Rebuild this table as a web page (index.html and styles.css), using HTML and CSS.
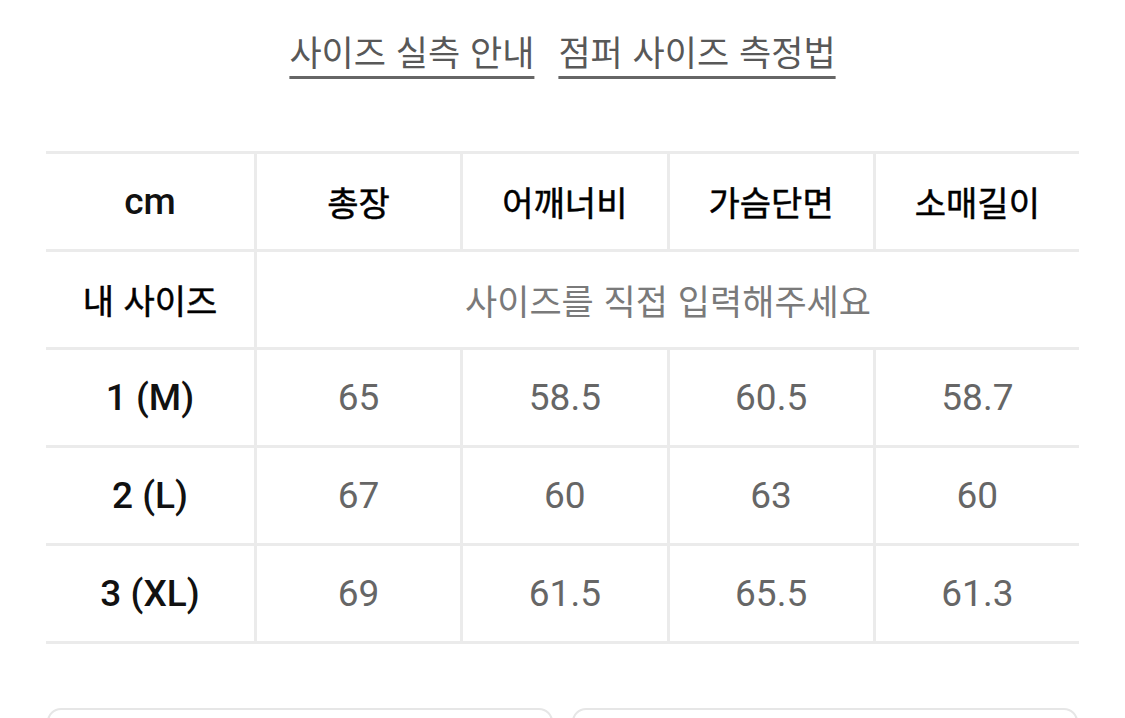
FILE: index.html
```html
<!DOCTYPE html>
<html lang="ko">
<head>
<meta charset="utf-8">
<title>사이즈 실측 안내</title>
<link rel="stylesheet" href="styles.css">
</head>
<body>
<div class="page">
  <nav class="links">
    <a class="link" href="#">사이즈 실측 안내</a>
    <a class="link" href="#">점퍼 사이즈 측정법</a>
  </nav>
  <div class="size-table">
    <div class="cell head">cm</div>
    <div class="cell head ko">총장</div>
    <div class="cell head ko">어깨너비</div>
    <div class="cell head ko">가슴단면</div>
    <div class="cell head ko">소매길이</div>

    <div class="cell head ko">내 사이즈</div>
    <div class="cell placeholder span4">사이즈를 직접 입력해주세요</div>

    <div class="cell head">1 (M)</div>
    <div class="cell val">65</div>
    <div class="cell val">58.5</div>
    <div class="cell val">60.5</div>
    <div class="cell val">58.7</div>

    <div class="cell head">2 (L)</div>
    <div class="cell val">67</div>
    <div class="cell val">60</div>
    <div class="cell val">63</div>
    <div class="cell val">60</div>

    <div class="cell head">3 (XL)</div>
    <div class="cell val">69</div>
    <div class="cell val">61.5</div>
    <div class="cell val">65.5</div>
    <div class="cell val">61.3</div>
  </div>
  <div class="buttons">
    <div class="btn"></div>
    <div class="btn"></div>
  </div>
</div>
</body>
</html>
```

FILE: styles.css
```css
html, body {
  margin: 0;
  padding: 0;
  background: #fff;
}
body {
  font-family: Roboto, "Noto Sans CJK KR", sans-serif;
  color: #111;
  overflow: hidden;
}
.page {
  padding: 0 46px;
}
.links {
  display: flex;
  justify-content: center;
  gap: 24px;
  padding-top: 27px;
  height: 123px;
  box-sizing: border-box;
}
.link {
  font-size: 35px;
  line-height: 48px;
  height: 48px;
  color: #585858;
  text-decoration: underline;
  text-decoration-thickness: 3px;
  text-underline-offset: 10px;
  text-decoration-color: #666;
  font-family: "Noto Sans CJK KR", sans-serif;
}
.size-table {
  display: grid;
  grid-template-columns: 208px repeat(4, 1fr);
  grid-auto-rows: 95px;
  gap: 3px;
  padding: 3px 0;
  background: #ebebeb;
  margin-top: 28px;
}
.cell {
  background: #fff;
  display: flex;
  align-items: center;
  justify-content: center;
  font-size: 37px;
}
.head {
  font-weight: 500;
  color: #111;
}
.head.ko {
  font-family: "Noto Sans CJK KR", sans-serif;
  font-weight: 400;
  font-size: 34px;
  color: #000;
  -webkit-text-stroke: 0.5px #000;
}
.val {
  color: #666;
}
.placeholder {
  color: #7a7a7a;
  font-size: 35px;
  font-family: "Noto Sans CJK KR", sans-serif;
}
.span4 {
  grid-column: span 4;
}
.buttons {
  display: flex;
  gap: 19px;
  margin-top: 64px;
  padding: 0 1px;
}
.btn {
  flex: 1;
  height: 60px;
  border: 2px solid #e6e6e6;
  border-radius: 14px;
}
```
